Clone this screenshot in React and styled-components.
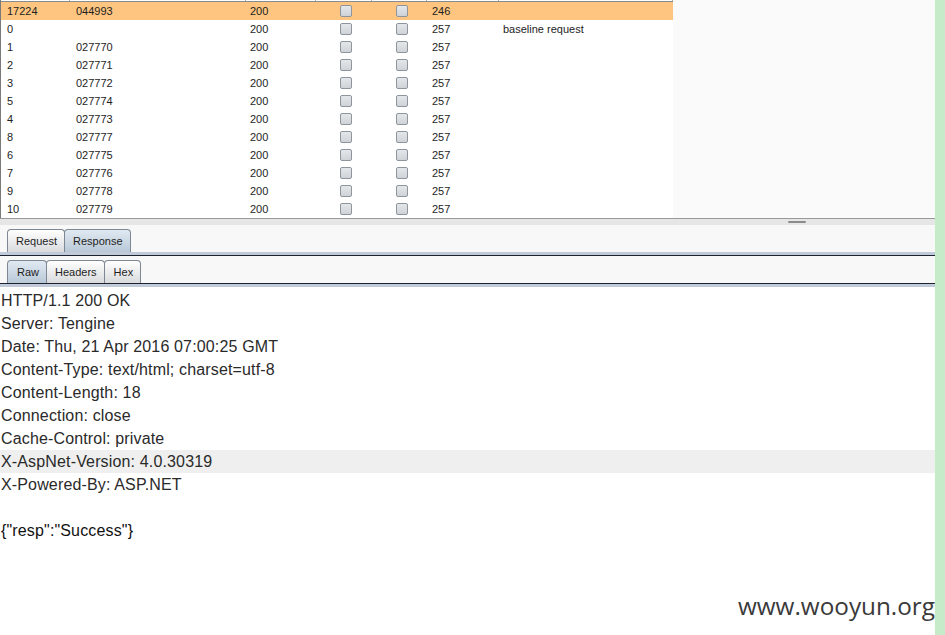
import styled, { createGlobalStyle } from "styled-components";

const GlobalStyle = createGlobalStyle`
  html, body {
    margin: 0;
    padding: 0;
    background: #fff;
  }
  body {
    font-family: "Liberation Sans", Arial, sans-serif;
  }
`;

const Page = styled.div`
  position: relative;
  display: flex;
  width: 945px;
  height: 635px;
  overflow: hidden;
`;

const Main = styled.div`
  width: 935px;
  display: flex;
  flex-direction: column;
`;

const GreenStrip = styled.div`
  width: 10px;
  background: #c6ebc9;
`;

const TopPane = styled.div`
  display: flex;
  height: 218px;
  background: #fafafa;
  border-bottom: 1px solid #9a9a9a;
`;

const Table = styled.div`
  width: 673px;
  background: #fff;
  border-left: 1px solid #7a7a7a;
  box-sizing: border-box;
  font-size: 11px;
  color: #1e1e1e;
`;

const cols = "69px 176px 70px 56px 55px 72px 174px";

const HeaderRow = styled.div`
  display: grid;
  grid-template-columns: ${cols};
  height: 1px;
  border-bottom: 1px solid #8a8a8a;
`;

const HeaderCell = styled.div`
  border-right: 1px solid #b0b0b0;
`;

const Row = styled.div`
  display: grid;
  grid-template-columns: ${cols};
  height: 18px;
  align-items: center;
  background: ${p => (p.selected ? "#fdc580" : "#fff")};
`;

const Cell = styled.div`
  padding-left: ${p => p.pad || 4}px;
  display: flex;
  justify-content: ${p => (p.center ? "center" : "flex-start")};
  white-space: nowrap;
  line-height: 18px;
`;

const Check = styled.span`
  width: 10px;
  height: 10px;
  border: 1px solid #8e959c;
  border-radius: 2px;
  background: linear-gradient(#e4e7ea, #cfd3d7);
  box-sizing: content-box;
`;

const Filler = styled.div`
  flex: 1;
`;

const Divider = styled.div`
  height: 6px;
  background: #e6e6e6;
  display: flex;
  justify-content: center;
  align-items: center;
  padding-left: 659px;
  box-sizing: border-box;
`;

const Grip = styled.div`
  width: 18px;
  height: 2px;
  border-radius: 1px;
  background: #8c8c8c;
`;

const TabStrip = styled.div`
  background: #f8f8f8;
  padding: 4px 0 0 8px;
  display: flex;
  height: 23px;
`;

const LineBand = styled.div`
  height: ${p => p.h}px;
  background: ${p => p.color};
`;

const Tab = styled.div`
  height: 23px;
  box-sizing: border-box;
  padding: 0 7px 0 ${p => p.pl}px;
  font-size: 11px;
  line-height: 22px;
  color: #1e1e1e;
  border: 1px solid #7d8894;
  border-bottom: none;
  border-radius: 4px 4px 0 0;
  margin-left: -1px;
  background: ${p =>
    p.active
      ? "linear-gradient(#e0e9f2, #b9c8d7)"
      : "linear-gradient(#ffffff, #d9dadc)"};
`;

const TextPane = styled.div`
  flex: 1;
  background: #fff;
  padding-top: 2px;
  font-family: "Liberation Sans", Arial, sans-serif;
  font-size: 16px;
  letter-spacing: 0.15px;
  color: #222;
`;

const Line = styled.div`
  height: 23px;
  line-height: 23px;
  padding-left: 1px;
  white-space: pre;
  background: ${p => (p.hl ? "#efefef" : "transparent")};
  color: ${p => (p.strong ? "#111" : "#2a2a2a")};
`;

const Watermark = styled.div`
  position: absolute;
  right: 10px;
  top: 589px;
  font-family: "Open Sans", "Liberation Sans", sans-serif;
  font-size: 24.3px;
  color: #3a3a3a;
`;

const rows = [
  ["17224", "044993", "200", "246", "", true],
  ["0", "", "200", "257", "baseline request"],
  ["1", "027770", "200", "257", ""],
  ["2", "027771", "200", "257", ""],
  ["3", "027772", "200", "257", ""],
  ["5", "027774", "200", "257", ""],
  ["4", "027773", "200", "257", ""],
  ["8", "027777", "200", "257", ""],
  ["6", "027775", "200", "257", ""],
  ["7", "027776", "200", "257", ""],
  ["9", "027778", "200", "257", ""],
  ["10", "027779", "200", "257", ""],
];

const lines = [
  "HTTP/1.1 200 OK",
  "Server: Tengine",
  "Date: Thu, 21 Apr 2016 07:00:25 GMT",
  "Content-Type: text/html; charset=utf-8",
  "Content-Length: 18",
  "Connection: close",
  "Cache-Control: private",
  "X-AspNet-Version: 4.0.30319",
  "X-Powered-By: ASP.NET",
  "",
  '{"resp":"Success"}',
];

export default function App() {
  return (
    <Page>
      <GlobalStyle />
      <Main>
        <TopPane>
          <Table>
            <HeaderRow>
              {[0, 1, 2, 3, 4, 5, 6].map(i => (
                <HeaderCell key={i} />
              ))}
            </HeaderRow>
            {rows.map(r => (
              <Row key={r[0]} selected={r[5]}>
                <Cell pad={6}>{r[0]}</Cell>
                <Cell pad={6}>{r[1]}</Cell>
                <Cell pad={4}>{r[2]}</Cell>
                <Cell center pad={0}>
                  <Check />
                </Cell>
                <Cell center pad={0}>
                  <Check />
                </Cell>
                <Cell pad={5}>{r[3]}</Cell>
                <Cell pad={4}>{r[4]}</Cell>
              </Row>
            ))}
          </Table>
          <Filler />
        </TopPane>
        <Divider>
          <Grip />
        </Divider>
        <TabStrip>
          <Tab pl={8}>Request</Tab>
          <Tab pl={8} active>
            Response
          </Tab>
        </TabStrip>
        <LineBand h={3} color="#c0cad8" />
        <LineBand h={1} color="#1c2230" />
        <TabStrip>
          <Tab pl={9} active>
            Raw
          </Tab>
          <Tab pl={8}>Headers</Tab>
          <Tab pl={9}>Hex</Tab>
        </TabStrip>
        <LineBand h={1} color="#1c2230" />
        <LineBand h={3} color="#c0cad8" />
        <TextPane>
          {lines.map((l, i) => (
            <Line key={i} hl={i === 7} strong={i === 10}>
              {l}
            </Line>
          ))}
        </TextPane>
      </Main>
      <GreenStrip />
      <Watermark>www.wooyun.org</Watermark>
    </Page>
  );
}
